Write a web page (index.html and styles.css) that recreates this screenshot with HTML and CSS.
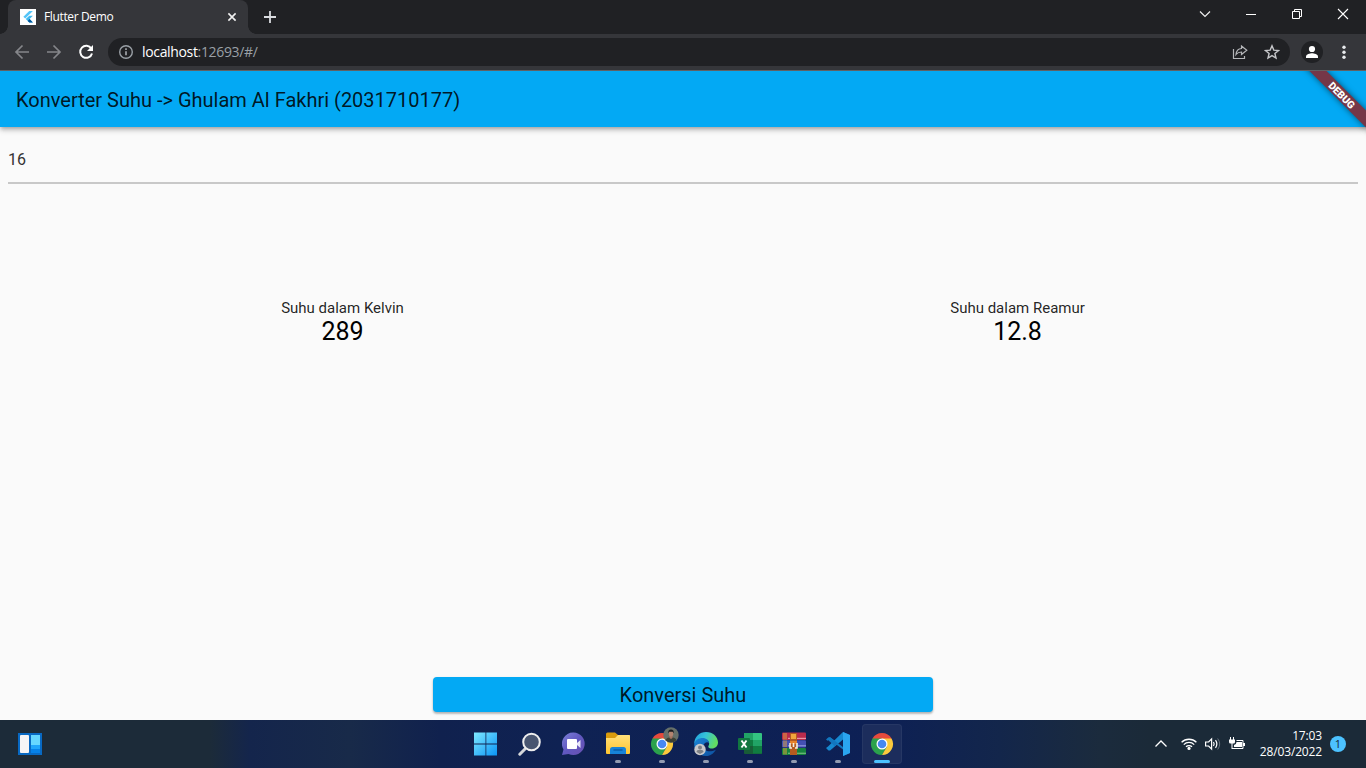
FILE: index.html
```
<!DOCTYPE html>
<html lang="id">
<head>
<meta charset="utf-8">
<title>Flutter Demo</title>
<link rel="stylesheet" href="styles.css">
</head>
<body>
<svg class="defs" width="0" height="0" aria-hidden="true">
  <defs>
    <linearGradient id="win" x1="0" y1="0" x2="1" y2="1"><stop offset="0" stop-color="#7fe9ff"/><stop offset="1" stop-color="#0a94f5"/></linearGradient>
    <linearGradient id="chat" x1="0" y1="0" x2="1" y2="1"><stop offset="0" stop-color="#7c80d8"/><stop offset=".5" stop-color="#6058c0"/><stop offset="1" stop-color="#6a50b0"/></linearGradient>
    <linearGradient id="folder" x1="0" y1="0" x2="0" y2="1"><stop offset="0" stop-color="#ffe07a"/><stop offset="1" stop-color="#ffc52f"/></linearGradient>
    <linearGradient id="edgeTop" x1="0" y1="0" x2="1" y2=".3"><stop offset="0" stop-color="#1f9fe0"/><stop offset=".5" stop-color="#35c3d8"/><stop offset="1" stop-color="#62dc62"/></linearGradient>
    <linearGradient id="edgeLow" x1="0" y1="0" x2="1" y2="1"><stop offset="0" stop-color="#1b86d8"/><stop offset="1" stop-color="#0d4f9e"/></linearGradient>
    <symbol id="chrome" viewBox="0 0 24 24">
      <path d="M12 12 2.47 6.5A11 11 0 0 1 21.53 6.5z" fill="#e64a3c"/>
      <path d="M12 12V23A11 11 0 0 1 2.47 6.5z" fill="#2ba24c"/>
      <path d="M16.8 14.7 12 23 7.5 14.8z" fill="#2ba24c"/>
      <path d="M2.5 6.5 7.2 14.7 12 6.5z" fill="#2ba24c"/>
      <path d="M16.8 14.7 12 23A11 11 0 0 0 21.53 6.5H12z" fill="#fcca3c"/>
      <circle cx="12" cy="12" r="5.5" fill="#fff"/><circle cx="12" cy="12" r="4.3" fill="#4688f1"/>
    </symbol>
  </defs>
</svg>

<header class="tabstrip">
  <div class="tab">
    <svg class="favicon" width="16" height="16" viewBox="0 0 16 16"><path fill="#fff" d="M0 0h16v16H0z"/><path d="M9.3 2h3.6L5.2 9.4 3.4 7.7z" fill="#54c5f8"/><path d="M9.3 6.8h3.6L9.6 10l3.3 3.6H9.3L5.8 10z" fill="#40b9f0"/><path d="m7.7 11.900 1.900-1.900 3.300 3.600H9.3z" fill="#01579b"/></svg>
    <span class="tab-title">Flutter Demo</span>
    <svg class="tab-close" width="16" height="16" viewBox="0 0 16 16"><path d="m4.400 4.400 7.200 7.200m0-7.200-7.200 7.200" stroke="#f1f1f1" stroke-width="1.600"/></svg>
  </div>
  <svg class="new-tab" width="16" height="16" viewBox="0 0 16 16"><path d="M8 2v12M2 8h12" stroke="#dadce0" stroke-width="1.800"/></svg>
  <div class="window-controls">
    <svg viewBox="0 0 46 28"><path d="m18 11.500 5 5 5-5" fill="none" stroke="#eee" stroke-width="1.200"/></svg>
    <svg viewBox="0 0 46 28"><path d="M18 14.500h10" stroke="#fff"/></svg>
    <svg viewBox="0 0 46 28"><path d="M18.500 11.500h7v7h-7zM20.500 11v-1.500h7v7h-2" fill="none" stroke="#fff"/></svg>
    <svg viewBox="0 0 46 28"><path d="m18 9 10 10m0-10-10 10" stroke="#fff" stroke-width="1.100"/></svg>
  </div>
</header>

<nav class="toolbar">
  <svg class="nav-icon" viewBox="0 0 16 16"><path d="M15 8H2m6.500-6.500L2 8l6.500 6.500" fill="none" stroke="#85868a" stroke-width="1.700"/></svg>
  <svg class="nav-icon" viewBox="0 0 16 16"><path d="M1 8h13M7.500 1.500 14 8l-6.500 6.500" fill="none" stroke="#85868a" stroke-width="1.700"/></svg>
  <svg class="nav-icon" viewBox="0 0 16 16"><path d="M13.300 4.600A6 6 0 1 0 14 9.400" fill="none" stroke="#fff" stroke-width="2"/><path d="M15 1v6H9z" fill="#fff"/></svg>
  <div class="omnibox">
    <svg width="16" height="16" viewBox="0 0 16 16"><circle cx="8" cy="8" r="6.300" fill="none" stroke="#9aa0a6" stroke-width="1.400"/><path d="M8 7.200v4M8 4.300v1.600" stroke="#b0b4b9" stroke-width="1.500"/></svg>
    <span class="url">localhost<span class="url-rest">:12693/#/</span></span>
    <svg class="share" width="16" height="16" viewBox="0 0 16 16"><path d="M1.500 5v9.500h11V12" fill="none" stroke="#b5b6b9" stroke-width="1.200"/><path d="M9.500 2 14.800 6.300 9.500 10.500V8C7 8 5.300 8.800 4 10.500 4.300 7 6.300 4.700 9.500 4.500z" fill="none" stroke="#b5b6b9" stroke-width="1.200"/></svg>
    <svg width="16" height="16" viewBox="0 0 16 16"><path d="m8 1.800 1.800 4.300 4.700.4-3.600 3 1.100 4.600L8 11.600l-4 2.500 1.100-4.600-3.600-3 4.700-.4z" fill="none" stroke="#c5c6c9" stroke-width="1.400"/></svg>
  </div>
  <svg class="profile" width="22" height="22" viewBox="0 0 22 22"><circle cx="11" cy="11" r="11" fill="#202124"/><circle cx="11" cy="8" r="3.100" fill="#fff"/><path d="M5 17v-1.500C5 13 9 12.200 11 12.200s6 .8 6 3.300V17z" fill="#fff"/></svg>
  <svg class="more" width="16" height="16" viewBox="0 0 16 16"><g fill="#e8eaed"><circle cx="8" cy="3.200" r="1.700"/><circle cx="8" cy="8.200" r="1.700"/><circle cx="8" cy="13.200" r="1.700"/></g></svg>
</nav>

<main class="app">
  <header class="appbar"><h1>Konverter Suhu -&gt; Ghulam Al Fakhri (2031710177)</h1></header>
  <div class="debug"><span>DEBUG</span></div>
  <section class="content">
    <div class="field">16</div>
    <div class="results">
      <div class="result"><span class="label">Suhu dalam Kelvin</span><span class="value">289</span></div>
      <div class="result"><span class="label">Suhu dalam Reamur</span><span class="value">12.8</span></div>
    </div>
    <button class="convert">Konversi Suhu</button>
  </section>
</main>

<footer class="taskbar">
  <svg class="widgets" width="24" height="22" viewBox="0 0 24 22"><path fill="#0869c3" d="M0 0h24v22H0z"/><rect x="2" y="2" width="9" height="18" rx="1" fill="#f5f5f6"/><path fill="#67d7ff" d="M13 2h9v10h-9z"/><path fill="#20a5fa" d="M13 12h9v4h-9z"/><path fill="#0682e9" d="M13 16h9v4h-9z"/></svg>
  <div class="task-icons">
    <div class="task"><svg viewBox="0 0 24 24"><path d="M0 .500h11.500v11H0zM12.300.500H23v11H12.300zM0 12.500h11.500v11H0zM12.300 12.500H23v11H12.300z" fill="url(#win)"/></svg></div>
    <div class="task"><svg viewBox="0 0 24 24"><path d="m7.500 16.500-5.700 5.700" stroke="#d5d7da" stroke-width="3" stroke-linecap="round"/><circle cx="13.500" cy="10" r="8.300" fill="#485570" stroke="#eee" stroke-width="2"/></svg></div>
    <div class="task"><svg viewBox="0 0 24 24"><path d="M11.500.500a11.300 11.300 0 1 1-5 21.500L0 23l1.500-5.500A11.300 11.300 0 0 1 11.500.500z" fill="url(#chat)"/><rect x="5" y="7" width="10" height="10" rx="1" fill="#fff"/><path d="m15 11 3.500-3v8L15 13z" fill="#e7e5fa"/></svg></div>
    <div class="task running"><svg viewBox="0 0 24 24"><path d="M0 2q0-1.500 1.500-1.500H9L12 3h11q1 0 1 1v4H0z" fill="#d99b0c"/><path d="M0 6h9l3-3h11q1 0 1 1v17q0 1-1 1H1q-1 0-1-1z" fill="url(#folder)"/><path d="M4 22v-4.500q0-2.500 2.500-2.500h11q2.500 0 2.500 2.500V22z" fill="#1683d8"/><path d="M8 18h8" stroke="#0a5da8" stroke-width="1.500" stroke-linecap="round"/></svg></div>
    <div class="task running"><svg viewBox="0 0 24 24"><use href="#chrome"/></svg>
      <svg class="avatar" viewBox="0 0 16 16"><circle cx="8" cy="8" r="7.700" fill="#66706a"/><path d="M2.500 13.300Q3.500 10.500 8 10.300q4.500.2 5.500 3a7.700 7.700 0 0 1-11 0z" fill="#3b4034"/><path d="M6.500 8h3v3L8 12l-1.500-1z" fill="#a5735f"/><ellipse cx="8" cy="6.500" rx="2.300" ry="3" fill="#b38470"/><path d="M5.300 6.500Q4.800 2.500 8 2.500t2.700 4L9.700 4.800H6.300z" fill="#191c20"/></svg></div>
    <div class="task running"><svg viewBox="0 0 24 24"><path d="M.200 12C.200 4.700 5.800 0 12 0c7 0 12 4.800 12 10.500 0 3.700-3 6-6 6-3.500 0-4.300-1.500-3.300-3 1.200-2 .3-6-4.700-6-5 0-9.800 3-9.800 4.500z" fill="url(#edgeTop)"/><path d="M.200 12C1 8 5 6 8.500 6c4 0 6.500 2.500 6.500 5-1-1.500-5.500-1-5.500 3.500 0 4.500 6 6.500 12.300 3.200C19.500 22 15.500 24 12 24 5 24 0 18.500.200 12z" fill="url(#edgeLow)"/><circle cx="6" cy="17.500" r="5.700" fill="#c9c9cb"/><circle cx="6" cy="15.500" r="2" fill="#7d8085"/><path d="M2.500 20q0-2.200 3.500-2.200t3.500 2.200L6 22z" fill="#7d8085"/></svg></div>
    <div class="task running"><svg viewBox="0 0 24 24"><path d="M6 1h9v7H6z" fill="#21a366"/><path d="M15 1h8q1 0 1 1v6h-9z" fill="#33c481"/><path d="M6 8h9v6H6z" fill="#107c41"/><path d="M15 8h9v6h-9z" fill="#21a366"/><path d="M6 14h18v7q0 1-1 1H7q-1 0-1-1z" fill="#185c37"/><path d="M15 14h9v7.500h-9z" fill="#107c41"/><rect y="6" width="12" height="12" rx="1" fill="#117740"/><path d="m3.500 8.500 5 7m0-7-5 7" stroke="#fff" stroke-width="1.900"/></svg></div>
    <div class="task running"><svg viewBox="0 0 24 24"><rect y=".500" width="24" height="7.500" rx="1" fill="#b92b4c"/><path d="M6 5.800h18V7H6z" fill="#e895a5"/><rect y="8.300" width="24" height="7.300" rx="1" fill="#4450b3"/><path d="M6 13.200h18v1.200H6z" fill="#8f97dc"/><rect y="16" width="24" height="7" rx="1" fill="#16833d"/><path d="M6 20.700h18v1.100H6z" fill="#7cc083"/><path d="M2 1v6.500M4 1v6.500M2 8.500v6.500M4 8.500v6.500M2 16v6.500M4 16v6.500" stroke="#dda23c"/><path d="M8 1h7v22H8z" fill="#b65b20"/><path d="M9 2h5v5H9z" fill="#f2a63d"/><path d="M8 9h7v3H8z" fill="#e6832d"/><path d="M8 11v5h2m5-5v5h-2M11.500 11v4" fill="none" stroke="#f3eee0" stroke-width="1.600"/></svg></div>
    <div class="task running"><svg viewBox="0 0 24 24"><path d="M17 0 24 3v18l-7 3V17.500L3.500 7.500l-2 1.300L0 7.500l2.500-2.300h1.600L17 15z" fill="#1276be"/><path d="M17 0 2 14.500 0 16l2.500 2.500h1.600L17 7.500z" fill="#1688d0"/><path d="m4.100 5.200 8 6.100-3.300 2.900L1 7z" fill="#1276be"/><path d="m17 0 7 3v18l-7 3z" fill="#2aa5ef"/></svg></div>
    <div class="task active"><svg viewBox="0 0 24 24"><use href="#chrome"/></svg></div>
  </div>
  <div class="tray">
    <svg class="chevron" width="14" height="12" viewBox="0 0 14 12"><path d="m1.500 8.500 5.500-5.500 5.500 5.500" fill="none" stroke="#fff" stroke-width="1.300"/></svg>
    <svg class="wifi" width="16" height="14" viewBox="0 0 16 14"><path d="M.600 5.300a10.500 10.500 0 0 1 14.800 0M2.800 7.600a7.300 7.300 0 0 1 10.400 0M5 9.800a4.200 4.200 0 0 1 6 0" fill="none" stroke="#fff" stroke-width="1.300"/><circle cx="8" cy="11.400" r="1.600" fill="#fff"/></svg>
    <svg class="volume" width="17" height="14" viewBox="0 0 17 14"><path d="M.600 5h3l3-3v10l-3-3h-3z" fill="none" stroke="#fff" stroke-width="1.200"/><path d="M8.500 5q1.300 2 0 4M10.500 3.200q2.700 3.800 0 7.600" fill="none" stroke="#fff" stroke-width="1.200"/><path d="M12.700 1.500q4 5.500 0 11" fill="none" stroke="#66717c"/></svg>
    <svg class="battery" width="17" height="14" viewBox="0 0 17 14"><path d="M1.500 0v3M4.500 0v3" stroke="#fff"/><path d="M0 2.500h6V5q0 1.500-1.500 1.500h-3Q0 6.500 0 5zM2.500 6h1v6h-1z" fill="#fff"/><path d="M7.500 3.500H14v8H3" fill="none" stroke="#fff"/><path d="M5 8q2.500-.5 2.500-3H13v5H5zM14 6h2v3h-2z" fill="#fff"/></svg>
    <div class="clock"><span class="time">17:03</span><span>28/03/2022</span></div>
    <span class="notice">1</span>
  </div>
</footer>
</body>
</html>
```

FILE: styles.css
```
* { box-sizing: border-box; }
body { margin: 0; width: 1366px; height: 768px; overflow: hidden; display: flex; flex-direction: column; background: #fafafa; font-family: "Open Sans", "Noto Sans", sans-serif; }
svg { display: block; flex: none; }
.defs { position: absolute; }

.tabstrip { height: 34px; flex: none; display: flex; background: #202124; padding-left: 8px; }
.tab { position: relative; width: 240px; display: flex; align-items: center; padding: 0 8px 0 12px; background: #35363a; border-radius: 8px 8px 0 0; }
.tab::before, .tab::after { content: ""; position: absolute; bottom: 0; width: 8px; height: 8px; }
.tab::before { left: -8px; background: radial-gradient(circle at 0 0, #202124 7.500px, #35363a 8px); }
.tab::after { right: -8px; background: radial-gradient(circle at 100% 0, #202124 7.500px, #35363a 8px); }
.tab-title { margin-left: 8px; padding-bottom: 1px; color: #fff; font-size: 12px; letter-spacing: -.37px; }
.tab-close { margin-left: auto; }
.new-tab { margin: 9px 0 0 14px; }
.window-controls { margin-left: auto; display: flex; }
.window-controls svg { width: 46px; height: 28px; }

.toolbar { height: 37px; flex: none; display: flex; align-items: center; padding: 0 14px; background: #35363a; border-bottom: 1px solid #606164; }
.nav-icon { width: 16px; height: 16px; margin-right: 16px; }
.omnibox { width: 1182px; flex: none; height: 28px; margin-left: -2px; border-radius: 14px; background: #202124; display: flex; align-items: center; padding: 0 10px; }
.url { margin-left: 8px; font-size: 14px; letter-spacing: -.34px; line-height: 20px; color: #fff; }
.url-rest { color: #9aa0a6; }
.share { margin: 0 16px 0 auto; }
.profile { margin-left: 11px; }
.more { margin-left: 13px; }

.app { position: relative; flex: 1; min-height: 0; display: flex; flex-direction: column; overflow: hidden; font-family: Roboto, sans-serif; }
.appbar { height: 56px; flex: none; display: flex; align-items: center; padding: 2px 16px 0; background: #03a9f4; box-shadow: 0 2px 4px -1px #0003, 0 4px 5px #00000024, 0 1px 5px #0000001a; }
.appbar h1 { margin: 0; font-size: 20px; font-weight: 400; color: #000000de; }
.debug { position: absolute; top: 18px; right: -36px; width: 120px; height: 12px; display: flex; align-items: center; justify-content: center; transform: rotate(45deg); background: #753748; box-shadow: 0 0 6px #0008; color: #fff; font-size: 10.200px; font-weight: 900; }
.content { flex: 1; display: flex; flex-direction: column; align-items: center; padding: 8px; }
.field { width: 100%; height: 49px; padding-top: 15px; border-bottom: 2px solid #c8c8c8; font-size: 16px; line-height: 20px; color: #333; }
.results { flex: 1; width: 100%; display: flex; justify-content: space-around; padding-top: 115px; }
.result { display: flex; flex-direction: column; align-items: center; color: #000; }
.label { font-size: 15px; line-height: 18px; color: #000000de; }
.value { font-size: 25px; line-height: 29px; }
.convert { width: 500px; height: 35px; border: 0; border-radius: 4px; background: #03a9f4; box-shadow: 0 2px 2px #0003, 0 1px 3px #0002; font: 20px Roboto, sans-serif; color: #000000de; padding: 0; }

.taskbar { height: 48px; flex: none; display: flex; align-items: center; position: relative; padding-left: 18px; background: linear-gradient(90deg, #1c2b39 0, #1c2b39 210px, #14254c 250px, #182a49 350px, #10214e 440px, #0f2253 560px, #0d2055 880px, #13264b 1000px, #1b2b3d 1100px, #1b2a38 1150px); }
.task-icons { display: flex; gap: 4px; margin-left: 424px; }
.task { position: relative; width: 40px; height: 40px; display: flex; align-items: center; justify-content: center; border-radius: 4px; }
.task > svg:first-child { width: 24px; height: 24px; }
.task .avatar { position: absolute; left: 21px; top: 3px; width: 16px; height: 16px; }
.running::after, .active::after { content: ""; position: absolute; bottom: 1px; left: 17px; width: 6px; height: 3px; border-radius: 2px; background: #929bb1; }
.active { background: #1c2d5c; box-shadow: inset 0 0 0 1px #263764; }
.active::after { left: 12px; width: 16px; background: #4cc2ff; }
.tray { flex: 1; display: flex; align-items: center; justify-content: flex-end; padding-right: 20px; color: #fff; }
.wifi { margin-left: 13px; }
.volume { margin-left: 8px; }
.battery { margin-left: 7px; }
.clock { width: 76px; display: flex; flex-direction: column; align-items: flex-end; font-size: 12px; line-height: 16px; letter-spacing: -.15px; }
.notice { width: 16px; height: 16px; margin-left: 8px; border-radius: 50%; background: #4cc2ff; color: #142838; font-size: 11px; line-height: 16px; text-align: center; }
```
